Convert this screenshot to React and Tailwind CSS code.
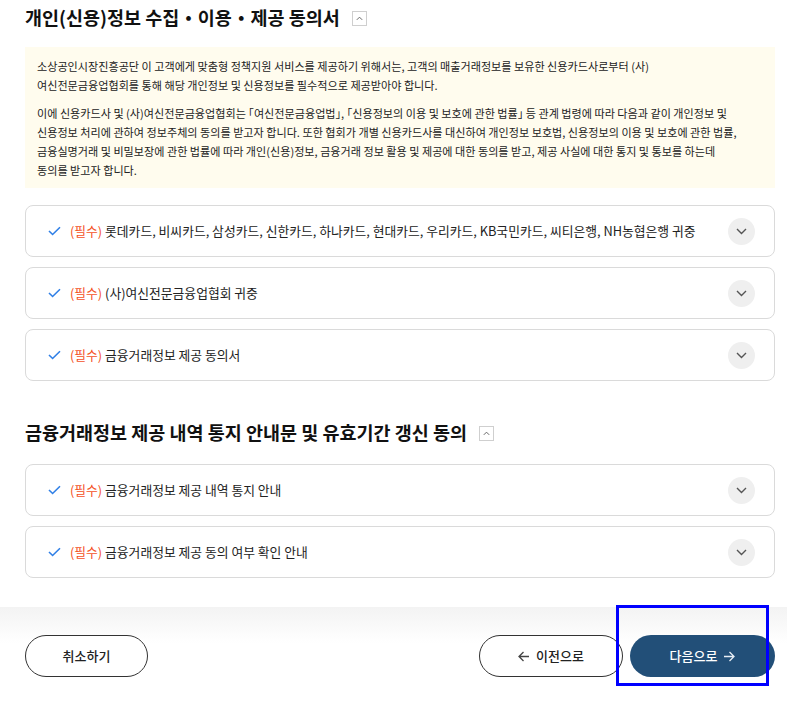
const font = { fontFamily: '"Noto Sans CJK KR", "Noto Sans", sans-serif' };

function Toggle() {
  return (
    <span className="ml-[12px] flex h-[15px] w-[15px] items-center justify-center border border-[#cfcfcf] bg-white">
      <svg width="9" height="9" viewBox="0 0 10 10" fill="none">
        <path d="M2 6.5L5 3.5L8 6.5" stroke="#666" strokeWidth="1.1" />
      </svg>
    </span>
  );
}

function Item({ text }) {
  return (
    <div className="flex h-[52px] items-center rounded-[8px] border border-[#dadada] bg-white pl-[22px] pr-[19px]">
      <svg width="13" height="10" viewBox="0 0 13 10" fill="none" className="mr-[9px]">
        <path d="M1 5L4.6 8.5L12 1.2" stroke="#2f7fe6" strokeWidth="1.6" />
      </svg>
      <span className="text-[12.8px] text-[#222]">
        <span className="text-[#f4511e]">(필수)</span> {text}
      </span>
      <span className="ml-auto flex h-[27px] w-[27px] items-center justify-center rounded-full bg-[#efefef]">
        <svg width="11" height="7" viewBox="0 0 11 7" fill="none">
          <path d="M1 1L5.5 5.5L10 1" stroke="#555" strokeWidth="1.4" />
        </svg>
      </span>
    </div>
  );
}

export default function App() {
  return (
    <div style={font} className="relative h-[703px] w-[787px] overflow-hidden bg-white text-[#222]">
      <div className="pl-[25px] pr-[12px] pt-[6px]">
        <div className="flex h-[24px] items-center">
          <h2 className="text-[18.5px] font-bold text-[#111]">개인(신용)정보 수집・이용・제공 동의서</h2>
          <Toggle />
        </div>

        <div className="mt-[17px] h-[141px] whitespace-nowrap bg-[#fffcee] px-[12px] pt-[10px] text-[11.1px] leading-[19px] text-[#222]">
          <p>
            소상공인시장진흥공단 이 고객에게 맞춤형 정책지원 서비스를 제공하기 위해서는, 고객의 매출거래정보를 보유한 신용카드사로부터 (사)
            <br />
            여신전문금융업협회를 통해 해당 개인정보 및 신용정보를 필수적으로 제공받아야 합니다.
          </p>
          <p className="mt-[9px]">
            이에 신용카드사 및 (사)여신전문금융업협회는 ｢여신전문금융업법｣, ｢신용정보의 이용 및 보호에 관한 법률｣ 등 관계 법령에 따라 다음과 같이 개인정보 및
            <br />
            신용정보 처리에 관하여 정보주체의 동의를 받고자 합니다. 또한 협회가 개별 신용카드사를 대신하여 개인정보 보호법, 신용정보의 이용 및 보호에 관한 법률,
            <br />
            금융실명거래 및 비밀보장에 관한 법률에 따라 개인(신용)정보, 금융거래 정보 활용 및 제공에 대한 동의를 받고, 제공 사실에 대한 통지 및 통보를 하는데
            <br />
            동의를 받고자 합니다.
          </p>
        </div>

        <div className="mt-[17px] flex flex-col gap-[10px]">
          <Item text="롯데카드, 비씨카드, 삼성카드, 신한카드, 하나카드, 현대카드, 우리카드, KB국민카드, 씨티은행, NH농협은행 귀중" />
          <Item text="(사)여신전문금융업협회 귀중" />
          <Item text="금융거래정보 제공 동의서" />
        </div>

        <div className="mt-[40px] flex h-[24px] items-center">
          <h2 className="text-[18.5px] font-bold text-[#111]">금융거래정보 제공 내역 통지 안내문 및 유효기간 갱신 동의</h2>
          <Toggle />
        </div>

        <div className="mt-[19px] flex flex-col gap-[10px]">
          <Item text="금융거래정보 제공 내역 통지 안내" />
          <Item text="금융거래정보 제공 동의 여부 확인 안내" />
        </div>
      </div>

      <div className="mt-[29px] h-[96px] bg-[linear-gradient(to_bottom,#f3f3f3,#ffffff_36px)] pl-[25px] pr-[12px] pt-[28px]">
        <div className="flex items-center">
          <button className="h-[42px] w-[123px] rounded-full border border-[#333] bg-white text-[13px] font-medium text-[#222]">
            취소하기
          </button>
          <button className="ml-auto flex h-[42px] w-[144px] items-center justify-center gap-[6px] rounded-full border border-[#333] bg-white text-[13px] font-medium text-[#222]">
            <svg width="12" height="11" viewBox="0 0 12 11" fill="none">
              <path d="M11 5.5H1.5M5.5 1L1 5.5L5.5 10" stroke="#444" strokeWidth="1.3" />
            </svg>
            이전으로
          </button>
          <button className="ml-[7px] flex h-[42px] w-[145px] items-center justify-center gap-[6px] rounded-full bg-[#224f78] text-[13px] font-medium text-white">
            다음으로
            <svg width="12" height="11" viewBox="0 0 12 11" fill="none">
              <path d="M1 5.5H10.5M6.5 1L11 5.5L6.5 10" stroke="#e8eef5" strokeWidth="1.3" />
            </svg>
          </button>
        </div>
      </div>

      <div className="pointer-events-none absolute left-[616px] top-[605px] h-[81px] w-[153px] border-[3px] border-[#0000ff]" />
    </div>
  );
}
